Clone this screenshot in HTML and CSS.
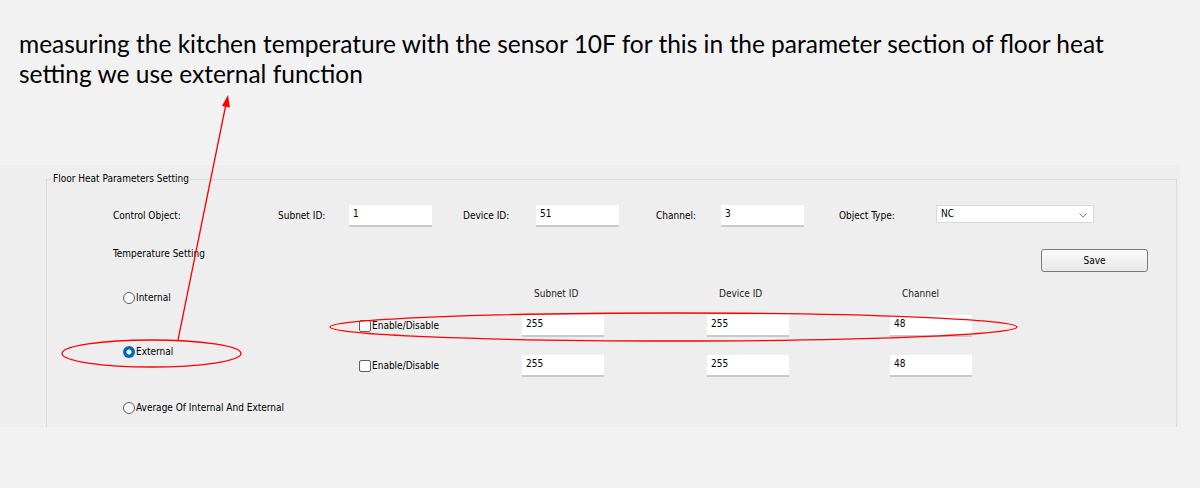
FILE: index.html
```html
<!DOCTYPE html>
<html>
<head>
<meta charset="utf-8" />
<title>Floor Heat Parameters Setting</title>
<link rel="stylesheet" href="styles.css">
</head>
<body>

<!-- ********************* note begin *********************** -->
<p class="note">measuring the kitchen temperature with the sensor 10F for this in the parameter section of floor heat<br>setting we use external function</p>
<!-- ********************* note end *********************** -->

<div class="shot">
 <fieldset class="group">
  <legend>Floor Heat Parameters Setting</legend>

  <div class="rowTop">
   <span>Control Object:</span>
   <span>Subnet ID:</span>
   <div class="field">1</div>
   <span>Device ID:</span>
   <div class="field">51</div>
   <span>Channel:</span>
   <div class="field">3</div>
   <span>Object Type:</span>
   <div class="combo">NC
    <svg class="chev" width="8" height="5" viewBox="0 0 8 5"><path d="M0.5 0.5 L4 4 L7.5 0.5" fill="none" stroke="#7a7a7a" stroke-width="1"/></svg>
   </div>
  </div>

  <div class="rowTemp">
   <span class="tempLabel">Temperature Setting</span>
   <div class="btn">Save</div>
  </div>

  <div class="lower">
   <div class="modes">
    <div class="opt"><span class="radio"></span>Internal</div>
    <div class="opt"><span class="radio on"></span>External</div>
    <div class="opt"><span class="radio"></span>Average Of Internal And External</div>
   </div>

   <div class="targets">
    <span></span>
    <span class="head">Subnet ID</span>
    <span class="head">Device ID</span>
    <span class="head">Channel</span>

    <div class="opt"><span class="check"></span>Enable/Disable</div>
    <div class="field small">255</div>
    <div class="field small">255</div>
    <div class="field small">48</div>

    <div class="opt"><span class="check"></span>Enable/Disable</div>
    <div class="field small">255</div>
    <div class="field small">255</div>
    <div class="field small">48</div>
   </div>
  </div>
 </fieldset>
</div>

<!-- red marks drawn over the screenshot -->
<svg class="marks" width="1200" height="488" viewBox="0 0 1200 488">
 <ellipse cx="151.5" cy="353.5" rx="89.5" ry="13.5" fill="none" stroke="#ff0000" stroke-width="1.3"/>
 <ellipse cx="673.5" cy="327" rx="343.5" ry="14" fill="none" stroke="#ff0000" stroke-width="1.3"/>
 <line x1="178" y1="340" x2="226" y2="104" stroke="#ff0000" stroke-width="1.3"/>
 <polygon points="228,95 222,106 230,107.5" fill="#ff0000"/>
</svg>

</body>
</html>
```

FILE: styles.css
```css
body {
margin:0; background-color:#f2f2f2; width:1200px; height:488px; overflow:hidden;
font-family:"DejaVu Sans Condensed", "Liberation Sans", Arial, sans-serif; color:#000;
}
.note {
margin:0; padding:29px 0 0 19px;
font-family:Lato, "Open Sans", sans-serif; font-size:24.5px; line-height:30px; color:#000;
white-space:nowrap;
}
.shot {
margin-top:76px; width:1180px; height:262px; overflow:hidden; background-color:#eeeeee;
}
.group {
margin:7px 0 0 46px; padding:19px 28px 0 66px; width:1035px; height:300px;
border:1px solid #dcdcdc; border-bottom:none; min-width:0;
font-size:10px; line-height:14px;
}
.group legend {
padding:0 1px; margin-left:-61px; line-height:14px; font-size:10px; color:#000;
}
.rowTop {
display:grid; align-items:center; height:22px;
grid-template-columns:165px 71px 114px 73px 120px 65px 118px 97px 158px;
}
.field {
box-sizing:border-box; width:83px; height:22px; padding:2px 4px 0;
background-color:#fff; border-bottom:2px solid #c9c9c9; color:#000;
}
.field.small { width:82px; }
.combo {
box-sizing:border-box; width:158px; height:18px; align-self:start; padding:1px 4px 0;
background-color:#fff; border:1px solid #d9d9d9; position:relative; color:#000;
}
.chev { position:absolute; right:6px; top:7px; }
.rowTemp {
display:flex; justify-content:space-between; align-items:flex-start; height:23px; margin-top:22px;
}
.tempLabel { margin-top:-2px; }
.btn {
box-sizing:border-box; width:107px; height:23px; line-height:21px; text-align:center;
border:1px solid #7a7a7a; border-radius:3px;
background:linear-gradient(#fafafa, #e8e8ea); color:#000;
}
.lower { display:flex; }
.modes {
width:236px; padding:19px 0 0 10px;
display:flex; flex-direction:column; gap:40px;
}
.modes .opt:last-child { margin-top:2px; }
.opt { display:flex; align-items:center; height:14px; white-space:nowrap; }
.radio {
box-sizing:border-box; width:12px; height:12px; margin-right:1px;
border:1px solid #5f5f5f; border-radius:50%; background-color:#fafafa;
}
.radio.on {
border:none; background:radial-gradient(circle, #fff 0 2.3px, #0067c0 2.8px);
}
.check {
box-sizing:border-box; width:12px; height:12px; margin-right:1px;
border:1px solid #5f5f5f; border-radius:2px; background-color:#fafafa;
}
.targets {
display:grid; padding-top:15px; align-items:start;
grid-template-columns:163px 185px 183px 83px;
grid-template-rows:28px 40px 22px;
}
.targets .opt { margin-top:4px; }
.head { padding-left:12px; color:#222; }
.marks { position:absolute; left:0; top:0; pointer-events:none; }
```
